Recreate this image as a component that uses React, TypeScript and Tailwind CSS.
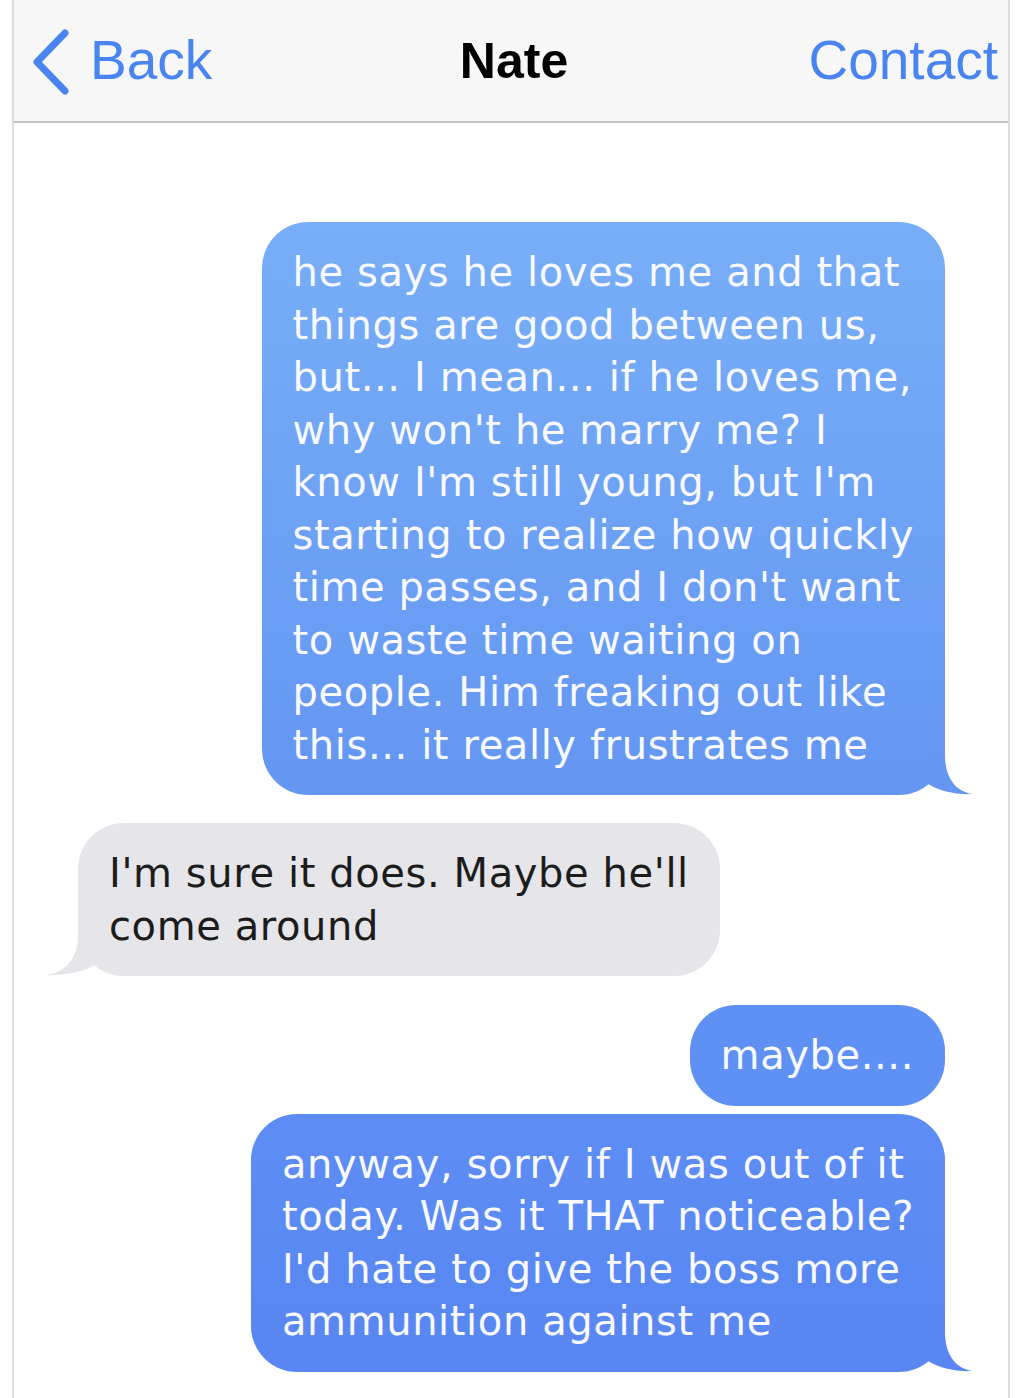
import React from 'react';

type Msg = {
  from: 'me' | 'them';
  lines: string[];
  tail?: boolean;
  gap: string;
  bg: string;
  tailColor: string;
};

const messages: Msg[] = [
  {
    from: 'me',
    tail: true,
    gap: 'mt-0',
    bg: 'bg-gradient-to-b from-[#78aef7] to-[#6496f2]',
    tailColor: '#6496f2',
    lines: [
      'he says he loves me and that',
      'things are good between us,',
      'but... I mean... if he loves me,',
      "why won't he marry me? I",
      "know I'm still young, but I'm",
      'starting to realize how quickly',
      "time passes, and I don't want",
      'to waste time waiting on',
      'people. Him freaking out like',
      'this... it really frustrates me',
    ],
  },
  {
    from: 'them',
    tail: true,
    gap: 'mt-[28px]',
    bg: 'bg-[#e5e5ea]',
    tailColor: '#e5e5ea',
    lines: ["I'm sure it does. Maybe he'll", 'come around'],
  },
  {
    from: 'me',
    gap: 'mt-[29px]',
    bg: 'bg-[#5f91f4]',
    tailColor: '#5f91f4',
    lines: ['maybe....'],
  },
  {
    from: 'me',
    tail: true,
    gap: 'mt-[8px]',
    bg: 'bg-gradient-to-b from-[#5d8df4] to-[#5986f2]',
    tailColor: '#5986f2',
    lines: [
      'anyway, sorry if I was out of it',
      'today. Was it THAT noticeable?',
      "I'd hate to give the boss more",
      'ammunition against me',
    ],
  },
];

// tail drawn in a 56x48 box, bubble edge sits at x=20
const TAIL_ME = 'M0 0 H20 V8 C20 30 30 44 47 47 C32 48 14 44 3 37 L0 0 Z';
const TAIL_THEM = 'M0 0 H20 V8 C20 30 32 45 53 47 C36 48 15 44 3 37 L0 0 Z';

const Bubble: React.FC<{ msg: Msg }> = ({ msg }) => {
  const mine = msg.from === 'me';
  return (
    <div className={`flex ${mine ? 'justify-end' : 'justify-start'} ${msg.gap}`}>
      <div className={`relative w-fit rounded-[46px] px-[31px] py-[24px] ${msg.bg}`}>
        {msg.tail && (
          <svg
            width="56"
            height="48"
            viewBox="0 0 56 48"
            className={`absolute bottom-0 ${mine ? 'right-[-36px]' : 'left-[-36px] -scale-x-100'}`}
          >
            <path d={mine ? TAIL_ME : TAIL_THEM} fill={msg.tailColor} />
          </svg>
        )}
        <div
          className={`relative font-['DejaVu_Sans',sans-serif] text-[40px] leading-[52.5px] tracking-[0.6px] whitespace-nowrap ${
            mine ? 'text-[#f8faff]' : 'text-[#1c1c1c]'
          }`}
        >
          {msg.lines.map((l, i) => (
            <div key={i}>{l}</div>
          ))}
        </div>
      </div>
    </div>
  );
};

export default function App() {
  return (
    <div className="min-h-[1398px] bg-white">
      <div className="ml-[12px] w-[998px] min-h-[1398px] border-x-2 border-[#dcdcdc] bg-white">
        {/* nav bar */}
        <div className="grid h-[123px] grid-cols-[1fr_auto_1fr] items-center border-b-2 border-[#c4c4c4] bg-[#f7f7f7] pl-[16px] pr-[10px] font-['Liberation_Sans',Arial,sans-serif]">
          <div className="flex items-center gap-[20px] text-[#4a84f1]">
            <svg width="40" height="66" viewBox="0 0 40 66" className="mt-[2px]">
              <path d="M35 4 L7 33 L35 62" fill="none" stroke="#4a84f1" strokeWidth="7" strokeLinecap="round" strokeLinejoin="round" />
            </svg>
            <span className="text-[55px] leading-none">Back</span>
          </div>
          <div className="text-[50px] font-bold leading-none text-black">Nate</div>
          <div className="text-right text-[55px] leading-none text-[#4a84f1]">Contact</div>
        </div>

        {/* messages */}
        <div className="pl-[64px] pr-[63px] pt-[99px] pb-[24px]">
          {messages.map((m, i) => (
            <Bubble key={i} msg={m} />
          ))}
        </div>
      </div>
    </div>
  );
}
